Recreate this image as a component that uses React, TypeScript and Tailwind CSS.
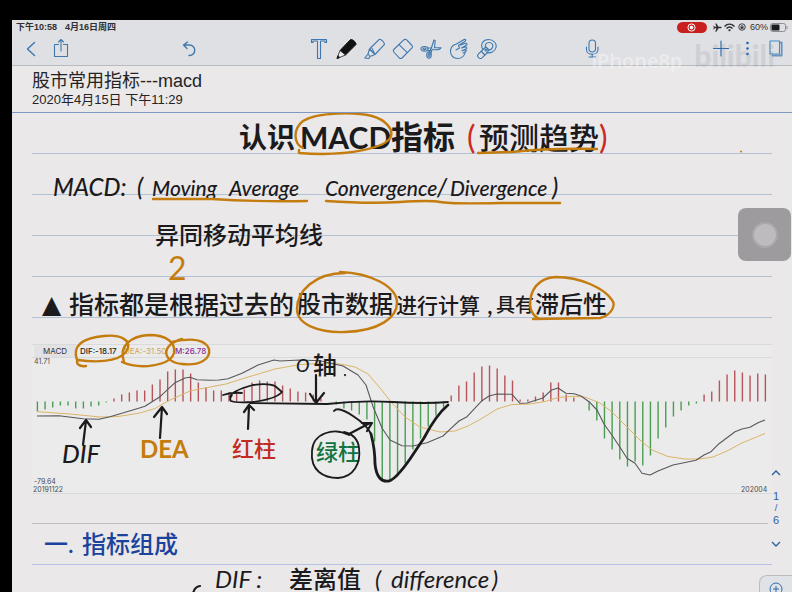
import React from "react";

const INK = "#1b1a1c";
const OCHRE = "#c47c0e";

/* Histogram values, one per trading day, measured from the zero axis. */
const bars = [
  -10, -8, -6, -4, -4, -7, -7, -5, -4, -1, 3, 7, 9, 11, 11, 17, 22, 30, 32, 32, 28, 19, 14, 11,
  11, 9, 11, 12, 19, 21, 20, 20, 16, 13, 10, 9, 7, 3, 0,
  -3, -7, -9, -13, -18, -40, -78, -80, -75, -62, -48, -37, -25, -14, -6,
  6, 16, 20, 29, 35, 36, 33, 26, 21, 2, 2, 5, 9, 19, 19, 7, 4, 0,
  -9, -19, -37, -48, -58, -65, -60, -64, -54, -37, -26, -15, -9, -4, -2,
  7, 10, 21, 27, 31, 29, 26, 28, 27,
];

const difLine =
  "37,416 59,415.7 83,418.7 99,419.3 110,416.7 137,408.7 145,406.3 160,396.7 175,382.7 185,378 190,377.3 197,379.7 210,380.3 219,380 228,378.7 242,373.3 258,365 274,360 280,361 300,360 320,360.7 343,366 358,375 366,385 373,406.7 382,428 390,440 402,445.7 413,446 427,442.7 443,436 451,428.3 459,421 467,416.7 482,400.7 489,396 497,394 512,394.3 520,403.3 527,403 543,398 551,390.3 558,388 566,393.3 574,393.7 581,396 589,401.7 597,410 604,424 612,435.3 620,447.3 627,458.3 635,463.3 642,473.3 650,475 658,471 673,465 696,460.3 704,455 711,451.7 719,443.7 735,431.7 742,429 750,427.3 758,422.7 765,420";
const deaLine =
  "37,411.7 70,414 100,417 118,416.5 140,413 155,408.5 170,400 190,391 210,387 226,384 245,378 275,369 300,364.5 320,363.5 340,364 355,367 368,374 380,388 392,403 405,417 420,427 440,432 455,431 468,426 481,419 497,409 512,404.5 530,404 545,401.5 558,397.5 573,396.3 585,397 600,403 612,412 625,425 640,440 652,450 668,456.5 685,459 700,459 713,457 727,451 742,443 765,433.5";

function IconButton({ label, children }: { label: string; children: React.ReactNode }) {
  return (
    <button type="button" aria-label={label} className="flex h-7 w-7 shrink-0 items-center justify-center text-[#3f78ae]">
      <svg width="24" height="24" viewBox="0 0 24 24" fill="none" stroke="currentColor" strokeWidth="1.1" strokeLinejoin="round" strokeLinecap="round">
        {children}
      </svg>
    </button>
  );
}

function StatusBar() {
  return (
    <div className="flex h-[14px] items-center pr-1 pl-1 text-[9px] leading-none font-bold text-[#303033]">
      <span>下午10:58</span>
      <span className="ml-2">4月16日周四</span>
      <span className="ml-auto flex h-[11px] w-[30px] items-center justify-center rounded-full bg-[#c8201f]">
        <svg width="9" height="9" viewBox="0 0 9 9" fill="none" stroke="#fff">
          <circle cx="4.5" cy="4.5" r="3.6" />
          <circle cx="4.5" cy="4.5" r="1.4" fill="#fff" />
        </svg>
      </span>
      <svg className="ml-[6px]" width="9" height="9" viewBox="0 0 24 24" fill="#303033">
        <path d="M23 12c0-1.200-1-2-2.500-2H15L9 1H6l3 9H4.500L2.500 7H1l1 5-1 5h1.500l2-3H9l-3 9h3l6-9h5.500c1.500 0 2.500-.8 2.500-2z" />
      </svg>
      <svg className="ml-[2px]" width="11" height="9" viewBox="0 0 22 18" fill="none" stroke="#303033" strokeWidth="3">
        <path d="M1 7C7 1 15 1 21 7M5 11c4-4 8-4 12 0" />
        <path d="M11 17l-3-3c2-2 4-2 6 0z" fill="#303033" stroke="none" />
      </svg>
      <svg className="ml-[3px]" width="8" height="8" viewBox="0 0 16 16" fill="none" stroke="#303033" strokeWidth="1.8">
        <circle cx="8" cy="8" r="6.5" />
        <rect x="5" y="7.500" width="6" height="4" fill="#303033" stroke="none" />
        <path d="M6 8V5.500h4V8" strokeWidth="1.300" />
      </svg>
      <span className="ml-1 font-normal">60%</span>
      <svg className="ml-[2px]" width="18" height="9" viewBox="0 0 18 9">
        <rect x=".5" y=".5" width="15" height="8" rx="2" fill="none" stroke="#8b8c90" />
        <rect x="1.500" y="1.500" width="8" height="6" rx="1" fill="#1b1a1c" />
        <path d="M17 3v3" stroke="#8b8c90" />
      </svg>
    </div>
  );
}

function Toolbar() {
  return (
    <div className="flex h-[31px] items-start pr-[2px] pl-[5px]">
      <IconButton label="返回">
        <path d="M15.500 6.500l-7 6.500 7 6.500" strokeWidth="1.5" />
      </IconButton>
      <div className="ml-[2px]">
        <IconButton label="分享">
          <path d="M9.500 8.500H5.500v12h13v-12H14.500M12 15V3.500M9.500 6L12 3.500 14.500 6" />
        </IconButton>
      </div>
      <div className="ml-[100px]">
        <IconButton label="撤销">
          <path d="M10.500 6L6.500 9l3.500 3.500M6.500 9h6a5 5 0 0 1 0 10.500H12" strokeWidth="1.4" />
        </IconButton>
      </div>
      <div className="ml-[102px] flex">
        <IconButton label="文字">
          <path d="M4.500 3.500h15v3h-1.500v-1.500h-4.500v17.500h-3v-17.500H6v1.500H4.500z" />
        </IconButton>
        <button type="button" aria-label="钢笔" aria-pressed="true" className="flex h-7 w-7 shrink-0 items-center justify-center">
          <svg width="24" height="24" viewBox="0 0 24 24" stroke="#1b1a1c" strokeLinejoin="round">
            <path d="M5 14.500L15.500 3.500c1.500-.8 6 2.800 5.500 5L10.500 19z" fill="#111" />
            <path d="M5 14.500L2 22.500l8.500-3.500z" fill="#eceef0" strokeWidth=".8" />
            <path d="M2 22.500l.9-2.800 1.900 1.800z" fill="#111" />
          </svg>
        </button>
        <IconButton label="荧光笔">
          <path d="M6.500 13L16.500 3.200c2 .2 5 3 5 5.200L12 18.500zM6.500 13L5 18M12 18.500L7 20.500M5 18L1.800 22l4 .5L7 20.500zM9 12.500l3 6" />
        </IconButton>
        <IconButton label="橡皮擦">
          <path d="M2.800 13.500L13 3.700c1-.6 1.700-.6 2.700.2l5.300 5.600c.7.800.7 1.600 0 2.400L11 22c-1 .8-1.700.8-2.700 0l-5.500-6c-.8-.9-.8-1.700 0-2.500zM8 8.700l8.300 8" />
        </IconButton>
        <IconButton label="剪刀">
          <path d="M12.500 11.500L15 4l1.200.5-.7 7.300M15.500 11.800H22c-.8 1.700-2 2-4.500 2H13l-1.500 4.500M10 17l2.500-5.500M9 12h4M9 14.500h3" />
          <ellipse cx="5.500" cy="12.800" rx="3.500" ry="2.300" />
          <ellipse cx="5.500" cy="12.800" rx="1.600" ry=".8" />
          <ellipse cx="10" cy="19" rx="2.300" ry="3.200" />
          <ellipse cx="10" cy="19" rx=".8" ry="1.500" />
        </IconButton>
        <IconButton label="套索">
          <path d="M9 14l3.500-2-1-2.500 6.700-4.200c1.200-1.200.3-2.400-1.100-1.700L9.500 8C5.500 9 3.500 12 3.500 15.500c0 4 3 7 7 7 4.500 0 7-3 7.800-6.500M13.500 9l5-1.700c1.700-.3 2 1.400.7 2L14.500 12l4-1c1.600-.2 1.800 1.500.4 2l-4 1.700 3.200-.7c1.500 0 1.600 1.500.2 2l-2.300 1" />
        </IconButton>
        <IconButton label="放大镜">
          <path d="M8 13.500C4.500 8 8.500 3.500 13.500 3.500c5 0 8.500 4 7.500 8-1 4.500-5.500 6-9.500 5.200M10.500 11.500c-1-3 1-5 3.500-5 3 0 4.500 2.500 3.500 5-.8 2-3 2.700-4.800 2.200M8 13.500l3-2.500 3 3-2.500 3.500L7 21.800c-1.200 1-2.500.8-3.500-.2-1.200-1.200-1.200-2.400-.2-3.400zM6.500 15.500l3.300 3.500" />
          <circle cx="11" cy="14" r="1" />
        </IconButton>
      </div>
      <div className="mr-[100px] ml-auto">
        <IconButton label="录音">
          <rect x="9" y="4" width="6.500" height="12" rx="3.250" />
          <path d="M6.500 11v2.500c0 6.500 11.500 6.500 11.500 0V11M12.200 18.500V21M9 21h6.500" />
        </IconButton>
      </div>
      <IconButton label="添加">
        <path d="M13 5v15M5.500 12.500h15" stroke="#2467ad" />
      </IconButton>
      <IconButton label="更多">
        <path d="M11.500 7v.01M11.500 12.500v.01M11.500 18v.01" stroke="#1e62b5" strokeWidth="2.6" />
      </IconButton>
      <IconButton label="页面">
        <path d="M6 5h9.500v13H6z" stroke="#3f8cc9" />
        <path d="M16.500 6.500h1.200V19.500H8.500" stroke="#6d93bd" strokeWidth="1.8" />
      </IconButton>
    </div>
  );
}

function Watermark() {
  return (
    <div aria-hidden="true" className="pointer-events-none absolute top-[19px] right-[17px] flex items-center leading-none whitespace-nowrap select-none">
      <span className="mt-3 mr-3 font-['Open_Sans',sans-serif] text-[20px] font-semibold text-white/40">iPhone8p</span>
      <span className="font-[Lato,sans-serif] text-[30px] font-black text-[#8c8f94]/20">bilibili</span>
    </div>
  );
}

function MacdChart() {
  return (
    <svg role="img" aria-label="MACD" className="block bg-[#ebebeb]" width="740" height="151" viewBox="32 343 740 151" fontFamily="Inter, 'Liberation Sans', sans-serif">
      <path d="M32 344.500h740M32 357.500h740M32 493.500h740" stroke="#dadadb" />
      <rect x="34" y="345" width="42" height="12" rx="2" fill="#e2e2e5" />
      <g fontSize="8">
        <text x="43" y="354" fill="#333">MACD</text>
        <text x="80" y="354" fill="#222" fontWeight="500">DIF:-18.17</text>
        <text x="124" y="354" fill="#cda45a">DEA:-31.50</text>
        <text x="175" y="354" fill="#8b2d9a" fontWeight="500">M:26.78</text>
      </g>
      <g fontSize="7" fill="#4b4b4d">
        <text x="34" y="364">41.71</text>
        <text x="34" y="484">-79.64</text>
        <text x="33" y="492">20191122</text>
        <text x="741" y="492">202004</text>
      </g>
      {bars.map((v, i) => (
        <rect
          key={i}
          x={36.7 + i * 7.663}
          y={v > 0 ? 401.5 - v : 401.5}
          width="1.400"
          height={Math.abs(v)}
          fill={v > 0 ? "#b8545b" : "#4a9e54"}
        />
      ))}
      <polyline points={deaLine} fill="none" stroke="#dcb468" strokeLinejoin="round" />
      <polyline points={difLine} fill="none" stroke="#58585b" strokeWidth="1.100" strokeLinejoin="round" />
      <g fontFamily="Lato, 'Noto Sans CJK SC', sans-serif" fontWeight="500">
        <text x="62" y="463" fontSize="25" fill={INK} fontStyle="italic">DIF</text>
        <text x="140" y="458" fontSize="24" fill={OCHRE} fontWeight="700">DEA</text>
        <text x="232" y="457" fontSize="22" fill="#c22b22">红柱</text>
        <text x="316" y="460" fontSize="22" fill="#12733f">绿柱</text>
        <text x="296" y="372" fontSize="18" fill={INK} fontStyle="italic">O</text>
        <text x="313" y="374" fontSize="24" fill={INK}>轴</text>
      </g>
    </svg>
  );
}

/* Freehand pen strokes laid over the note: rings, underlines and arrows. */
function InkLayer() {
  return (
    <svg aria-hidden="true" className="pointer-events-none absolute top-0 left-0" width="780" height="480" viewBox="12 112 780 480" fill="none" strokeLinecap="round" strokeLinejoin="round">
      <g stroke={OCHRE} strokeWidth="2.4">
        <path d="M303 147C293 142 293 128 303 120C318 111 356 111 372 115C386 119 393 128 391 135C388 146 350 156 299 152L299 149" />
        <path d="M478 152L512 151Q550 147 597 148" />
        <path d="M153 198L212 198Q260 201 307 200" />
        <path d="M326 200Q370 203 400 201T440 201T500 202L560 202" />
        <path d="M345 272C315 272 297 290 297 308C297 324 320 332 345 331C380 330 397 316 397 302C397 285 370 272 340 271" />
        <path d="M533 318L600 317C612 314 616 304 612 299C604 287 580 276 556 276C537 277 530 290 530 304C531 312 534 315 538 317" />
        <path d="M77 359C72 345 82 337 104 335C122 333 130 340 128 347C125 358 105 363 78 359C75 362 79 366 86 365" />
        <path d="M124 361C118 344 132 335 149 334C167 334 176 342 174 352C170 365 140 369 122 361" />
        <path d="M182 338C160 344 162 361 182 363C200 365 211 358 209 348C205 338 190 337 172 341" />
      </g>
      <g stroke={INK} strokeWidth="1.800">
        <path d="M250 402L327 403Q360 399 393 401T448 401" />
        <path d="M223 394Q232 391 242 392M230 396Q231 390 253 384Q268 382 275 385L282 391Q276 398 253 401Q235 402 231 400Q229 398 232 394" />
        <path d="M248 428L249 405M244 411L249 404L254 409" strokeWidth="2.200" />
        <path d="M316 374V400M310 393L316 402L324 392" strokeWidth="2.200" />
        <path d="M83 444L86 420M80 427L86 419L91 426" strokeWidth="2.200" />
        <path d="M160 437L162 406M154 416L162 406L167 413" strokeWidth="2.200" />
        <path d="M349 433L370 422M362 422L372 422L367 430" strokeWidth="2.200" />
        <path d="M334 410Q338 405 353 415Q367 424 371 433" strokeWidth="2" />
        <path d="M371 433Q375 448 375 463Q377 482 389 480Q396 478 410 458L424 437Q436 414 448 404" strokeWidth="2.800" />
        <path d="M349 434C334 426 313 432 312 450C310 470 324 477 338 477C354 476 361 462 359 447C358 438 353 433 344 431" />
        <path d="M345 374V374.100" strokeWidth="2.200" />
        <path d="M200 585Q194 586 193 593" strokeWidth="2.200" />
      </g>
      <circle cx="741" cy="150.500" r="1" fill={OCHRE} />
    </svg>
  );
}

function PageNavigator() {
  return (
    <nav aria-label="页码" className="absolute top-[352px] right-2 flex w-4 flex-col items-center font-['Liberation_Sans',sans-serif] text-[11px] leading-none text-[#2b5f9e]">
      <button type="button" aria-label="上一页" className="flex h-4 items-center">
        <svg width="10" height="6" viewBox="0 0 10 6" fill="none" stroke="currentColor" strokeWidth="1.300"><path d="M1 5l4-4 4 4" /></svg>
      </button>
      <span className="mt-[10px]">1</span>
      <span className="mt-[2px] text-[9px]">/</span>
      <span className="mt-[2px]">6</span>
      <button type="button" aria-label="下一页" className="mt-[10px] flex h-4 items-center">
        <svg width="10" height="6" viewBox="0 0 10 6" fill="none" stroke="currentColor" strokeWidth="1.300"><path d="M1 1l4 4 4-4" /></svg>
      </button>
    </nav>
  );
}

function Notes() {
  return (
    <main className="relative grow pl-5 font-[Lato,'Noto_Sans_CJK_SC',sans-serif] leading-none whitespace-nowrap text-[#1b1a1c]">
      <div className="mr-5 h-[230px] bg-[repeating-linear-gradient(to_bottom,transparent_0px,transparent_40px,#b3c1d4_40px,#b3c1d4_41px)]">
        <h2 className="flex h-12 items-center pl-[207px] text-[32px] font-bold">
          <span className="w-[61px] text-[28px]">认识</span>
          <span className="w-[91px] text-[30px]">MACD</span>
          <span className="w-[76px]">指标</span>
          <span className="w-3 font-normal text-[#cc2a22]">(</span>
          <span className="w-[120px] text-[30px] font-medium">预测趋势</span>
          <span className="font-normal text-[#cc2a22]">)</span>
        </h2>
        <p className="flex h-[52px] items-center pl-[21px] text-[21px] font-medium italic">
          <span className="w-[84px] text-[24px]">MACD:</span>
          <span className="w-[15px] text-[24px]">(</span>
          <span className="w-[77px]">Moving</span>
          <span className="w-[96px]">Average</span>
          <span className="w-[112px]">Convergence</span>
          <span className="w-[13px] text-[24px]">/</span>
          <span className="w-[102px]">Divergence</span>
          <span className="text-[24px]">)</span>
        </p>
        <p className="flex h-11 items-center pl-[123px] text-[24px] font-medium">异同移动平均线</p>
        <p className="flex h-[22px] items-center pl-[136px] text-[32px] text-[#c47c0e]">2</p>
        <p className="flex h-[50px] items-center pl-[10px] text-[25px] font-medium">
          <span className="w-[27px] font-['DejaVu_Sans',sans-serif] text-[25px]">▲</span>
          <span className="w-[228px]">指标都是根据过去的</span>
          <span className="w-[99px] text-[24px]">股市数据</span>
          <span className="w-[91px] text-[21px]">进行计算</span>
          <span className="w-[9px]">,</span>
          <span className="w-[39px] text-[19px]">具有</span>
          <span className="text-[24px]">滞后性</span>
        </p>
      </div>
      <figure>
        <MacdChart />
      </figure>
      <div className="mr-6 h-[30px] border-b border-[#bcbdc0]" />
      <h3 className="mr-5 flex h-[41px] items-center border-b border-[#b3c5e2] pl-3 text-[24px] font-medium text-[#1b439c]">
        <span className="w-[38px]">一.</span>
        <span>指标组成</span>
      </h3>
      <p className="flex h-[27px] items-center pl-[183px] text-[24px]">
        <span className="w-[74px] italic">DIF :</span>
        <span className="w-[86px] font-medium">差离值</span>
        <span className="w-4 italic">(</span>
        <span className="w-[101px] italic">difference</span>
        <span className="italic">)</span>
      </p>
      <InkLayer />
      <PageNavigator />
      <button type="button" aria-label="辅助触控" className="absolute top-[95px] right-[1px] flex h-[53px] w-[53px] items-center justify-center rounded-lg bg-[#9d9b9d]">
        <span className="h-[22px] w-[22px] rounded-full bg-[#bdbbbd] ring-2 ring-[#a9a7a9]" />
      </button>
      <button type="button" aria-label="放大" className="absolute right-0 bottom-0 flex h-[17px] w-[33px] justify-center overflow-hidden rounded-tl-lg border-t border-l border-[#b9bcc1] bg-[#dfe2e7] pt-[6px] text-[#2f6ca8]">
        <svg className="shrink-0" width="14" height="14" viewBox="0 0 14 14" fill="none" stroke="currentColor">
          <circle cx="7" cy="7" r="6" />
          <path d="M7 4v6M4 7h6" />
        </svg>
      </button>
    </main>
  );
}

export default function App() {
  return (
    <div className="flex h-screen flex-col overflow-hidden bg-black pt-5 pl-3 font-['Liberation_Sans','Noto_Sans_CJK_SC',sans-serif]">
      <header className="relative shrink-0 border-b border-[#b9bbbf] bg-[#dfe0e4]">
        <StatusBar />
        <Toolbar />
        <Watermark />
      </header>
      <div className="flex min-h-0 grow flex-col overflow-hidden bg-[#eae8e9]">
        <section className="flex h-[47px] shrink-0 flex-col justify-center gap-[3px] border-b border-[#7d98c2] pl-5 text-[#242426]">
          <h1 className="text-[18px] leading-[18px]">股市常用指标---macd</h1>
          <p className="text-[13px] leading-[13px]">2020年4月15日 下午11:29</p>
        </section>
        <Notes />
      </div>
    </div>
  );
}
